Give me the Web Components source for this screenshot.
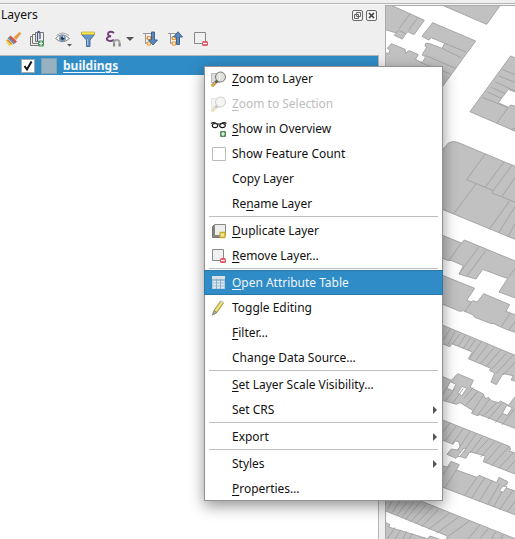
<!DOCTYPE html>
<html lang="en"><head><meta charset="utf-8"><title>Layers</title>
<style>html,body{margin:0;height:100%;overflow:hidden}body{font-family:"Noto Sans",sans-serif;font-size:13px;color:#111}</style></head>
<body><layers-app></layers-app>
<script>
const define = (name, html) => {
  const t = document.createElement('template');
  t.innerHTML = html;
  customElements.define(name, class extends HTMLElement {
    constructor() {
      super();
      this.attachShadow({mode: 'open'}).append(t.content.cloneNode(true));
    }
  });
};

const icons = {
  brush: `<path d="M9 6.500 14.500 1.200l1.300 1.300L11 8.500z" fill="#e8a13c" stroke="#c98028" stroke-width=".6"/><path d="M5.500 4.500 12 10.500l-2 2L3.500 6.500z" fill="#d65545"/><path d="M4 6 10 12l-1.500 1.500L2.500 7.500z" fill="#5c92cc"/><path d="M2.500 7.500 8.500 13q-2 2-4.500 1.800Q2 13 .8 9.500z" fill="#f1cc58"/><path d="M2.500 9l4 4M5 6.500l1.500 1" stroke="#c3532f" fill="none"/>`,
  group: `<path d="M.5 5.500h8v9h-8z" fill="#eee" stroke="#777"/><path d="M2.500 3.500h8v9h-8z" fill="#eee" stroke="#777"/><path d="M5.500 1.500h8v9h-8z" fill="#f1f1f1" stroke="#777"/><path d="M7.500 10V3.500q0-3 1.200-3T10 3.500V8" fill="none" stroke="#4c5b85" stroke-width="1.300"/><rect x="8" y="9.500" width="6" height="6" rx="1.500" fill="#4f9860"/><path d="M11 10.500v4M9 12.500h4" stroke="#fff" stroke-width="1.200"/>`,
  eye: `<path d="M.5 7.500Q7 0 14.500 7.500 7.500 14 .5 7.500z" fill="#fafafa" stroke="#888"/><path d="M1.500 4.500Q7.500-.5 14 4.500" fill="none" stroke="#aaa"/><circle cx="7.500" cy="7.300" r="3.400" fill="#7297bb"/><circle cx="7.500" cy="7.300" r="1.600" fill="#27394e"/><circle cx="8.500" cy="6" r=".7" fill="#fff"/><path d="M12 13h5l-2.500 2.500z" fill="#555"/>`,
  filter: `<path d="M1.500 1.500h13v2L10 9v6.500H6.500V9l-5-5.500z" fill="#6893c5" stroke="#4d719c"/><path d="M1.500 1h13v2.500h-13z" fill="#f2e750" stroke="#c1af3b" stroke-width=".7"/><path d="M7.500 8v6" stroke="#a1bfdf"/>`,
  expr: `<path d="M9 2Q6 0 3.500 1.500 1.800 4.500 6 5.300 1 5.800 2 8.800q2.500 2.200 7 .2" fill="none" stroke="#704678" stroke-width="2"/><path d="M9 14v-2q0-3 2.800-3t2.800 3v2" fill="none" stroke="#a4a4a4" stroke-width="2"/><path d="M8 14h2.200m3.300 0h2.200" stroke="#888" stroke-width="3"/>`,
  down: `<path d="M0 2.500h9M2.500 2v11M3 7h3M3 12h3" fill="none" stroke="#999"/><path d="M4.500 5.500h3v3h-3zM4.500 11h3v3h-3z" fill="#fff3dc" stroke="#ef9a3a" stroke-width="1.200"/><path d="M8.500 1h3v8h3L10 14 5.500 9h3z" fill="#5a89bd" stroke="#3e6590"/>`,
  up: `<path d="M0 2.500h9M2.500 2v11M3 7h3M3 12h3" fill="none" stroke="#999"/><path d="M4.500 5.500h3v3h-3zM4.500 11h3v3h-3z" fill="#fff3dc" stroke="#ef9a3a" stroke-width="1.200"/><path d="M8.500 13.500h3V6h3L10 .8 5.500 6h3z" fill="#5a89bd" stroke="#3e6590"/>`,
  remove: `<path d="M1.500 1.500h11v11h-11z" fill="#f0f0f0" stroke="#888"/><rect x="9" y="10" width="6" height="5" rx="1.500" fill="#e55763"/><path d="M10 12.500h4" stroke="#fff" stroke-width="1.200"/>`,
  zoom: `<path d="M.5 2.500h8v9h-8z" fill="#ddd" stroke="#bbb"/><path d="M6.500 9.500 1 15" stroke="#555" stroke-width="2.600"/><path d="M4.500 11.500.5 15.500" stroke="#e7b336" stroke-width="2"/><circle cx="9.500" cy="6" r="5" fill="#deded8" fill-opacity=".95" stroke="#777"/><path d="M8.500 2.500v7" stroke="#f4f4f0"/>`,
  glasses: `<path d="M0 2.500q3-2 6 .5h3.500q3-2.500 6-.5" fill="none" stroke="#111" stroke-width="1.200"/><ellipse cx="4" cy="4.600" rx="2.800" ry="2.100" fill="#fff" stroke="#111" stroke-width="1.200"/><ellipse cx="11.500" cy="4.600" rx="2.800" ry="2.100" fill="#fff" stroke="#111" stroke-width="1.200"/><rect x="9" y="10" width="6" height="6" rx="1.300" fill="#518d59"/><path d="M12 11v4M10 13h4" stroke="#fff" stroke-width="1.200"/>`,
  box: `<path d="M1.500 1.500h13v13h-13z" fill="#fff" stroke="#bbb"/>`,
  duplicate: `<path d="M1.500 3.500 3 2v10h10l-1 2.500H1.500z" fill="#8b8b85" stroke="#777770"/><path d="M3.500 1.500h11v11h-11z" fill="#eee" stroke="#888880"/><rect x="9" y="9.500" width="5" height="5" rx=".5" fill="#eee59a" stroke="#c7ad24" stroke-width="1.300"/>`,
  table: `<path d="M1 1h13v13H1z" fill="#b4cbdf"/><path d="M1 1h13v3H1z" fill="#d9e1e7"/><path d="M2 6.500h11M2 9.500h11M2 12.500h11" stroke="#dfe9f0" stroke-width="1.300"/><path d="M5.500 4v10M9.500 4v10M1 5h13" stroke="#7ba3c3" stroke-width=".8"/>`,
  pencil: `<path d="M1.500 15 3 10.500 9.500 1l3 2L6 12.500z" fill="#dfcc53" stroke="#948b4b" stroke-width=".8"/><path d="M4.700 11 11 2" stroke="#f6eb92" stroke-width="1.200"/><path d="M1.500 15 3 10.500l3 2z" fill="#aaa" stroke="#777" stroke-width=".6"/><path d="m9.500 1.500 1-1 2.500 1.500-.8 1.300z" fill="#ccc"/>`,
  float: `<rect x=".5" y=".5" width="10" height="10" rx="1.500" fill="#f4f4f4" stroke="#686868"/><path d="M4.500 2.500h4v4h-4zM2.500 4.500h4v4h-4z" fill="none" stroke="#666"/>`,
  close: `<rect x=".5" y=".5" width="10" height="10" rx="1.500" fill="#f4f4f4" stroke="#686868"/><path d="m3 3 5 5m0-5L3 8" stroke="#444" stroke-width="1.700"/>`
};
customElements.define('ui-icon', class extends HTMLElement {
  constructor() { super(); this.attachShadow({mode: 'open'}); }
  connectedCallback() {
    const s = +this.getAttribute('size') || 16;
    this.shadowRoot.innerHTML = `<style>:host{display:block;flex:none;width:${s}px;height:${s}px}svg{display:block;overflow:visible}</style><svg width="${s}" height="${s}">${icons[this.getAttribute('name')] || ''}</svg>`;
  }
});

customElements.define('menu-item', class extends HTMLElement {
  constructor() { super(); this.attachShadow({mode: 'open'}); }
  connectedCallback() {
    this.shadowRoot.innerHTML = `<style>
:host{display:flex;align-items:center;height:25px;box-sizing:border-box;padding:0 6px 0 7px;gap:5px;white-space:nowrap;position:relative}
:host([disabled]){color:#bcbcbc}:host([disabled]) ui-icon{opacity:.35}
:host([selected]){background:#308cc6;color:#eff5fa;box-shadow:inset 0 0 0 1px #2a76a7}
.t{flex:1;line-height:25px;transform:scaleX(.92);transform-origin:0 0}
.a{width:0;height:0;border:4px solid transparent;border-left:4px solid #555;border-right:0}
::slotted(u){text-underline-offset:2px;text-decoration-thickness:1px}
</style><ui-icon name="${this.getAttribute('icon') || ''}"></ui-icon><span class="t"><slot></slot></span>${this.hasAttribute('sub') ? '<i class="a"></i>' : ''}`;
  }
});
define('menu-line', `<style>:host{display:block;height:1px;margin:0 5px 1px;background:#bebebe}</style>`);
define('context-menu', `<style>
:host{display:block;width:239px;height:435px;background:#fff;box-shadow:0 5px 14px rgba(0,0,0,.42);position:relative}
:host::before{content:"";position:absolute;inset:0;border:1px solid #919191;pointer-events:none}
</style><slot></slot>`);
define('tool-bar', `<style>
:host{display:flex;height:25px;padding:5px 0 0 5px;box-sizing:border-box;gap:9px}
i{width:0;height:0;border:4px solid transparent;border-top:4px solid #555;border-bottom:0;margin:6px 0 0 -4px}
</style><ui-icon name="brush"></ui-icon><ui-icon name="group"></ui-icon><ui-icon name="eye"></ui-icon><ui-icon name="filter"></ui-icon><ui-icon name="expr"></ui-icon><i></i><ui-icon name="down"></ui-icon><ui-icon name="up"></ui-icon><ui-icon name="remove"></ui-icon>`);
define('layer-row', `<style>
:host{display:flex;align-items:center;height:19px;padding-left:21px;background:#308cc6;color:#f2f7fb}
.c{width:12px;height:12px;background:#fff;border:1px solid #a9a9a9}svg{display:block}
.s{width:14px;height:14px;background:#98b1c1;border:1px solid #859fad;margin:0 6px}
b{line-height:19px;font-weight:700;text-decoration:underline;text-decoration-thickness:1px;text-underline-offset:2px;transform:scaleX(.925);transform-origin:0 0}
</style><span class="c"><svg width="12" height="12"><path d="m2.500 6 2.500 3.500L9.500 1.500" fill="none" stroke="#111" stroke-width="2"/></svg></span><span class="s"></span><b><slot></slot></b>`);
define('layer-panel', `<style>
:host{display:flex;flex-direction:column;width:379px;height:100%}
header{display:flex;height:22px;align-items:center;padding:0 2px 0 1px;gap:3px}
header span{flex:1;line-height:20px;margin-bottom:2px;transform:scaleX(.93);transform-origin:0 0}
tool-bar{margin-bottom:4px}
.tree{flex:1;background:#fff;border:solid #b5b5b5;border-width:1px 1px 0 0}
</style><header><span>Layers</span><ui-icon name="float" size="11"></ui-icon><ui-icon name="close" size="11"></ui-icon></header><tool-bar></tool-bar><div class="tree"><layer-row>buildings</layer-row></div>`);

define('map-view', `<style>
:host{display:block;flex:1;margin:1px 0 0 6px;background:#fff;border:solid #aaa;border-width:1px 0 0 1px;overflow:hidden}
svg{display:block}path{fill:#c1c1c1;stroke:#a1a1a1;stroke-width:2.800}.l{fill:none}.h{fill:#fff}
</style><svg width="129" height="533" viewBox="386 6 129 533">
<g transform="translate(380 0) scale(.33333)">
<path d="M10 5 133 61 102 104 84 95 78 101 67 117 43 106 53 94 46 98 10 87zM190 17 320 73 360 17 360 5 170 5zM158 68 287 123 180 270 100 210 10 210 10 159 26 160 30 151 22 145 34 131 75 148 77 160 84 153 91 153 115 164 106 178 120 185 128 187 137 170 126 165 141 141 135 138 137 130 149 131 186 145 194 130 154 113 146 120 126 109zM392 168 420 180V400L270 335z"/>
<path class="l" d="M91 41 57 86M115 51 86 90M56 91 78 101M194 130 258 156M186 145 245 174M136 166 228 206M120 187 212 222M368 209 420 230M357 228 420 253M346 246 405 273M334 262 375 281M322 276 367 296M307 292 384 323M384 323 350 370"/>
<path class="h" d="M385 268 415 280V321L392 315 385 322 355 308z"/></g>
<g transform="translate(380 130) scale(.33333)">
<path d="M170 80 205 39Q217 31 233 37L420 115V334L170 231zM395-2 420 10V-10z"/>
<path class="l" d="M315 73 260 149 340 182M340 182 336 189 420 222M371 97 316 171M396 106 340 181M420 122 366 199M288 162 222 250M388 214 330 295M410 222 357 307M420 252 384 320"/></g>
<g transform="translate(380 260) scale(.33333)">
<path d="M170-81 244-51 253-60 420 9V119L357 96 384 54 378 54 308 28 288 57 260 49 237 42 250 17 213 1 206 2 170-12zM170 39 284 85 260 121 274 126 278 122 292 126 311 101 389 134 378 154 420 170V222L379 208 358 199 342 191 331 190 284 172 280 165 250 152 240 154 170 125zM170 188 300 242 420 292V367L393 360 400 347 369 341 349 374 333 366 344 339 328 331 333 325 265 296 277 276 215 251 210 260 170 245zM170 342 214 361 233 341 280 361 270 382 310 402 315 415 327 413 333 422 355 428 361 423 386 436 405 410 420 415V511L300 464 292 467 275 460 280 452 240 428 229 433 170 416z"/>
<path class="l" d="M244-51 208 0M297-40 237 42M319-30 260 49M385 52 415 13M275 126 254 155M390 160 365 199M415 172 387 210M211 207 190 239M225 214 203 256M240 221 218 251M256 226 235 258M271 233 250 266M286 240 264 271M304 245 269 295M324 253 285 304M344 262 300 312M363 269 318 320M381 278 335 327M400 285 350 339M420 292 369 345M214 361 180 416M280 382 252 415M295 394 268 425"/>
<path class="h" d="m211 365 17 8-10 19-18-7zM246 379l15 6-16 22-12-8z"/></g>
<g transform="translate(380 390) scale(.33333)">
<path d="M170 83 388 169 392 177 388 183 420 193V258L310 215 316 198 270 185 257 205 235 198 228 205 201 193 214 177 232 180 240 170 236 155 226 153 219 163 170 143zM170 224 202 231 213 214 238 224 229 240 291 262 297 256 350 278 357 262 383 275 381 283 375 285 372 291 420 309V380L170 285zM10 288 170 352 420 452V475L190 475 202 438 10 360zM10 394 30 404 26 411 142 446 150 438 185 450V480H10z"/>
<path class="l" d="M225-4 198 30M250-5 219 39M290 8 257 46M310 16 275 70M328 28 292 76M350 38 309 79M367 39 324 88M386 46 346 98M405 55 366 105M210 98 170 150M230 106 196 152M250 115 217 162M270 124 232 182M288 131 250 187M307 140 270 189M325 148 287 189M344 155 301 202M363 163 317 216M386 171 335 227M400 189 355 235M418 198 379 242M210 225 182 262M229 240 195 293M291 262 255 315M314 264 275 324M337 272 297 334M359 281 323 344M374 290 341 351M400 299 359 359M420 312 382 366M40 326 22 359M60 332 36 368M81 336 52 374M100 338 65 382M120 337 77 388M139 344 92 395M158 350 107 402M176 358 125 410M208 370 146 418M237 380 170 430M268 393 203 440M299 406 253 460M324 417 288 460M347 426 326 460M370 434 354 460M45 412 22 447M63 419 45 447M80 424 67 450M98 430 85 450"/>
<path class="h" d="M380 46l17 7-15 23-15-6zM252 174l6 2-20 25-5-3zM369 288l12 2-11 17-12-5z"/></g>
</svg>`);

define('layers-app', `<style>
:host{display:block;width:515px;height:539px;position:relative;background:#efefef;overflow:hidden}
.sp{height:3px}
.top{height:1px;background:#b4b4b4;box-shadow:0 1px #f8f8f8}
.w{display:flex;height:535px}
context-menu{position:absolute;left:204px;top:66px}
</style><div class="sp"></div><div class="top"></div><div class="w"><layer-panel></layer-panel><map-view></map-view></div>
<context-menu>
<menu-item icon="zoom"><u>Z</u>oom to Layer</menu-item>
<menu-item icon="zoom" disabled><u>Z</u>oom to Selection</menu-item>
<menu-item icon="glasses"><u>S</u>how in Overview</menu-item>
<menu-item icon="box">Show Feature Count</menu-item>
<menu-item>Copy Layer</menu-item>
<menu-item>Re<u>n</u>ame Layer</menu-item>
<menu-line></menu-line>
<menu-item icon="duplicate"><u>D</u>uplicate Layer</menu-item>
<menu-item icon="remove"><u>R</u>emove Layer…</menu-item>
<menu-line></menu-line>
<menu-item icon="table" selected><u>O</u>pen Attribute Table</menu-item>
<menu-item icon="pencil">Toggle Editing</menu-item>
<menu-item><u>F</u>ilter…</menu-item>
<menu-item>Change Data Source…</menu-item>
<menu-line></menu-line>
<menu-item><u>S</u>et Layer Scale Visibility…</menu-item>
<menu-item sub>Set CRS</menu-item>
<menu-line></menu-line>
<menu-item sub>Export</menu-item>
<menu-line></menu-line>
<menu-item sub>Styles</menu-item>
<menu-item><u>P</u>roperties…</menu-item>
</context-menu>`);
</script></body></html>
